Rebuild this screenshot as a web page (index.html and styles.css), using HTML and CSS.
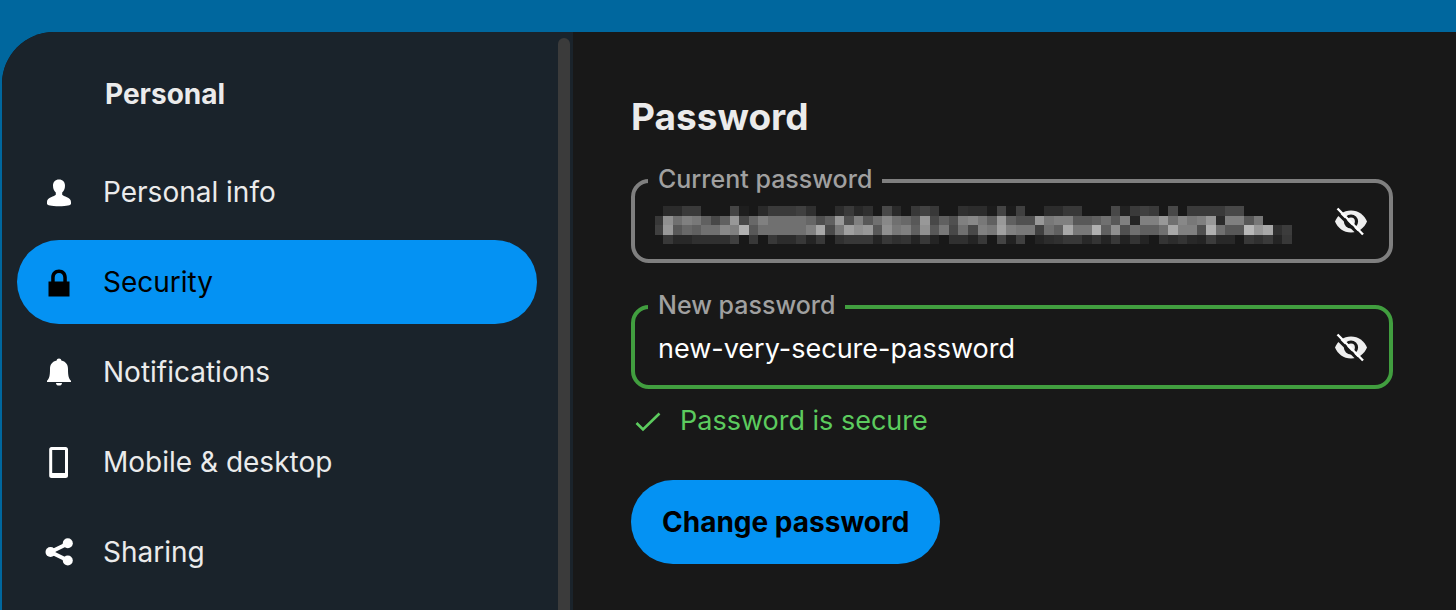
FILE: index.html
```html
<!DOCTYPE html>
<html lang="en">
<head>
<meta charset="utf-8">
<title>Security settings</title>
<link rel="stylesheet" href="styles.css">
</head>
<body>
<div class="shell">
  <aside class="sidebar">
    <nav class="nav" aria-label="Personal">
      <h2 class="nav-title">Personal</h2>
      <ul class="nav-list">
        <li><a class="nav-link" href="#info">
          <svg class="icon" viewBox="0 0 32 32"><path d="M16 3.500c-3.700 0-6 2.500-6 6.200 0 3.100 1.200 5.300 2.800 6.900v2.200c-1 1.700-8.800 2.200-8.800 7.300v1.400c0 1.900 4 2.700 12 2.700s12-.8 12-2.700v-1.400c0-5.100-7.800-5.600-8.800-7.300v-2.200c1.600-1.600 2.800-3.800 2.800-6.900 0-3.700-2.300-6.200-6-6.200z"/></svg>
          <span>Personal info</span></a></li>
        <li><a class="nav-link active" href="#security" aria-current="page">
          <svg class="icon" viewBox="0 0 32 32"><path d="M16 3.500c-4.600 0-7.800 3.300-7.800 7.800v4.200H5.500v15h21v-15h-2.700v-4.200c0-4.500-3.200-7.800-7.800-7.800zm0 3.500c2.700 0 4.300 2 4.300 4.700v3.800h-8.600v-3.800c0-2.700 1.600-4.700 4.300-4.700z"/></svg>
          <span>Security</span></a></li>
        <li><a class="nav-link" href="#notifications">
          <svg class="icon" viewBox="0 0 32 32"><path d="M16 2.500c-1.400 0-2.300.9-2.300 2.100C9.300 5.600 7 8.500 7 13c0 7-.8 9.700-3 11.700V26h24v-1.300c-2.200-2-3-4.700-3-11.700 0-4.500-2.300-7.400-6.700-8.400 0-1.200-.9-2.100-2.300-2.100zM13 27c0 1.600 1.200 2.600 3 2.600s3-1 3-2.600z"/></svg>
          <span>Notifications</span></a></li>
        <li><a class="nav-link" href="#mobile">
          <svg class="icon" viewBox="0 0 32 32"><path fill-rule="evenodd" d="M8.500 1h14.200C24 1 25 2 25 3.300v26.400c0 1.300-1 2.300-2.300 2.300H8.500c-1.300 0-2.300-1-2.300-2.300V3.300C6.200 2 7.200 1 8.500 1zm.7 3v23H22V4z"/></svg>
          <span>Mobile &amp; desktop</span></a></li>
        <li><a class="nav-link" href="#sharing">
          <svg class="icon" viewBox="0 0 32 32"><path d="M25 7.500 7.500 16 25 24.500" fill="none" stroke="currentColor" stroke-width="4"/><circle cx="7.500" cy="16" r="5"/><circle cx="24.800" cy="7.200" r="5"/><circle cx="24.800" cy="24.500" r="5"/></svg>
          <span>Sharing</span></a></li>
      </ul>
    </nav>
    <div class="scroll-thumb"></div>
  </aside>
  <main class="content">
    <h1 class="title">Password</h1>
    <form class="form">
      <div class="field">
        <label class="field-label" for="current">Current password</label>
        <div class="field-value">
          <input class="field-input" id="current" type="password">
          <svg class="mosaic" id="mosaic" viewBox="0 0 640 38" preserveAspectRatio="xMinYMid meet" shape-rendering="crispEdges" aria-hidden="true"></svg>
        </div>
        <button class="toggle" type="button" aria-label="Hide current password">
          <svg class="eye" viewBox="0 0 34 30"><path fill="#eee" d="M17 4.500C9.500 4.500 3.700 9 1 15.500 3.700 22 9.500 26.500 17 26.500S30.300 22 33 15.500C30.300 9 24.500 4.500 17 4.500z"/><circle cx="17" cy="15.500" r="5.500" fill="#eee" stroke="#181818" stroke-width="3.200"/><path d="m1.500 5 25 25" stroke="#181818" stroke-width="3"/><path d="m3.500 2.500 25.500 26" stroke="#fff" stroke-width="2.400"/></svg>
        </button>
      </div>
      <div class="field success">
        <label class="field-label" for="new">New password</label>
        <div class="field-value">
          <input class="field-input" id="new" type="text" value="new-very-secure-password" aria-describedby="hint">
        </div>
        <button class="toggle" type="button" aria-label="Hide new password">
          <svg class="eye" viewBox="0 0 34 30"><path fill="#eee" d="M17 4.500C9.500 4.500 3.700 9 1 15.500 3.700 22 9.500 26.500 17 26.500S30.300 22 33 15.500C30.300 9 24.500 4.500 17 4.500z"/><circle cx="17" cy="15.500" r="5.500" fill="#eee" stroke="#181818" stroke-width="3.200"/><path d="m1.500 5 25 25" stroke="#181818" stroke-width="3"/><path d="m3.500 2.500 25.500 26" stroke="#fff" stroke-width="2.400"/></svg>
        </button>
      </div>
      <p class="hint" id="hint">
        <svg class="check" viewBox="0 0 32 32"><path d="m4.500 18 6.500 6.500L27.500 8.500" fill="none" stroke="currentColor" stroke-width="2.600"/></svg>
        <span>Password is secure</span>
      </p>
      <button class="submit" type="button">Change password</button>
    </form>
  </main>
</div>
<script src="mosaic.js"></script>
</body>
</html>
```
FILE: styles.css
```css
* { box-sizing: border-box; }

body {
  margin: 0;
  height: 100vh;
  overflow: hidden;
  background: #00679e;
  color: #ebebeb;
  font-family: Inter, "Liberation Sans", sans-serif;
  font-size: 28px;
  line-height: 36px;
}

.shell {
  display: flex;
  height: calc(100vh - 32px);
  margin: 32px 0 0 2px;
  border-top-left-radius: 52px;
  background: #181818;
  overflow: hidden;
}

.sidebar {
  display: flex;
  flex: none;
  width: 571px;
  padding-right: 3px;
  background: #1a232b;
}

.nav { flex: 1; padding: 44px 21px 0 15px; }

.nav-title {
  margin: 0 0 38px;
  padding-left: 88px;
  font-size: 28px;
  line-height: 36px;
  font-weight: 700;
}

.nav-list {
  display: flex;
  flex-direction: column;
  gap: 6px;
  margin: 0;
  padding: 0;
  list-style: none;
}

.nav-link {
  display: flex;
  align-items: center;
  gap: 28px;
  height: 84px;
  padding: 0 26px;
  border-radius: 42px;
  color: inherit;
  text-decoration: none;
}

.nav-link.active { background: #0492f3; color: #000; }

.icon { flex: none; width: 32px; height: 32px; fill: #fff; color: #fff; }
.active .icon { fill: #000; }

.scroll-thumb {
  width: 12px;
  height: 100vh;
  margin-top: 6px;
  border-radius: 6px;
  background: #3b3b3b;
}

.content { flex: 1; min-width: 0; padding: 60px 63px 0 58px; }

.title {
  margin: 0 0 37px;
  font-size: 37px;
  line-height: 50px;
  font-weight: 700;
}

.form { display: flex; flex-direction: column; align-items: flex-start; }

.field {
  position: relative;
  display: flex;
  align-items: center;
  width: 100%;
  height: 84px;
  margin-bottom: 42px;
  padding: 0 21px 0 23px;
  border: 4px solid #7f7f7f;
  border-radius: 18px;
}

.field.success { margin-bottom: 14px; border-color: #419e3f; }

.field-label {
  position: absolute;
  top: -20px;
  left: 13px;
  padding: 0 10px;
  background: #181818;
  color: #a0a0a0;
  font-size: 25px;
  line-height: 32px;
  font-weight: 500;
}

.field-value { position: relative; flex: 1; min-width: 0; }

.field-input {
  display: block;
  width: 100%;
  height: 42px;
  padding: 2px 0 0;
  border: 0;
  outline: 0;
  background: none;
  color: #fff;
  font: inherit;
  font-size: 27px;
}

.mosaic {
  position: absolute;
  top: 6px;
  left: -3px;
  width: 640px;
  max-width: 100%;
  height: 38px;
}

.toggle {
  display: flex;
  margin: 0;
  padding: 0;
  border: 0;
  background: none;
}

.eye { width: 34px; height: 30px; }

.hint {
  display: flex;
  align-items: center;
  gap: 16px;
  margin: 0 0 41px;
  padding-left: 1px;
  color: #5ccb5e;
  font-size: 27px;
}

.check { width: 32px; height: 32px; }

.submit {
  height: 84px;
  padding: 0 31px;
  border: 0;
  border-radius: 42px;
  background: #0492f3;
  color: #000;
  font: inherit;
  font-weight: 700;
}
```
FILE: mosaic.js
```js
// Grey levels of the redacted value, two hex digits per cell, one string per row.
const rows = [
  "18 2b 2b 3a 3a 18 18 18 45 1e 18 2a 3a 3a 3a 40 30 18 18 2c 3a 28 30 18 48 2a 18 38 42 38 18 18 30 2c 2c 1c 44 1c 40 18 18 2c 2c 38 38 18 18 18 48 22 3a 40 3a 18 48 18 3a 3a 3a 3a 48 48 18 18 18 18 18",
  "38 90 70 80 78 60 48 60 98 48 68 80 70 70 70 70 66 4e 60 98 50 80 58 70 88 70 68 58 98 48 60 50 80 88 78 60 98 60 50 50 98 78 80 80 58 58 60 70 58 80 25 80 80 98 70 88 78 80 98 2a 80 80 58 78 18 18 18",
  "40 98 58 68 60 70 70 88 80 b0 58 70 70 70 70 70 80 a8 4a 78 a0 90 98 58 90 78 80 60 90 58 78 48 70 48 80 78 a0 80 78 78 40 70 60 a8 78 78 b0 60 90 50 70 60 60 70 a8 80 80 50 b0 70 58 58 b8 98 a8 30 3c",
  "18 38 28 28 30 30 30 30 40 18 38 18 38 2c 2c 38 24 38 18 30 38 38 38 24 38 30 34 24 38 24 18 30 30 24 38 18 44 22 40 18 24 2c 30 38 38 28 34 24 38 22 34 24 18 34 2c 34 28 24 3c 28 28 18 38 30 3a 24 38"
];
const svg = document.getElementById("mosaic");
const step = 9.53;
rows.forEach((row, y) => {
  row.split(" ").forEach((level, x) => {
    const cell = document.createElementNS("http://www.w3.org/2000/svg", "rect");
    cell.setAttribute("x", x * step - 1.5);
    cell.setAttribute("y", y * 9.5);
    cell.setAttribute("width", step);
    cell.setAttribute("height", 9.5);
    cell.setAttribute("fill", "#" + level + level + level);
    svg.appendChild(cell);
  });
});
```
